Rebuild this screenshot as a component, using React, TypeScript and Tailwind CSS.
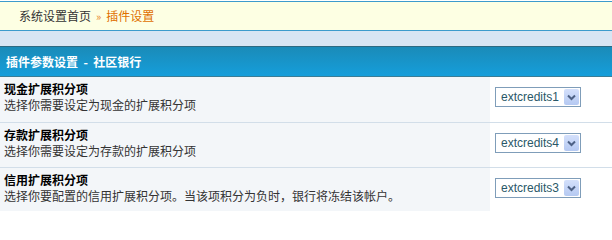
const FONT = { fontFamily: '"Noto Sans CJK SC", "Noto Sans", sans-serif' }

interface Row { title: string; desc: string; value: string }

const ROWS: Row[] = [
  { title: '现金扩展积分项', desc: '选择你需要设定为现金的扩展积分项', value: 'extcredits1' },
  { title: '存款扩展积分项', desc: '选择你需要设定为存款的扩展积分项', value: 'extcredits4' },
  { title: '信用扩展积分项', desc: '选择你要配置的信用扩展积分项。当该项积分为负时，银行将冻结该帐户。', value: 'extcredits3' },
]

function FakeSelect({ value }: { value: string }) {
  return (
    <div className="flex h-[20px] w-[86px] items-center justify-between border border-[#7f9db9] bg-white pl-[5px] pr-[1px]">
      <span className="text-[12px] leading-none text-[#2a5868]" style={{ fontFamily: '"Liberation Sans", Arial, sans-serif' }}>
        {value}
      </span>
      <span className="flex h-[16px] w-[15px] items-center justify-center rounded-[2px] bg-gradient-to-b from-[#d4e0fb] to-[#b5c9f2]">
        <svg width="9" height="7" viewBox="0 0 9 7">
          <path d="M1 1.5 L4.5 5 L8 1.5" fill="none" stroke="#4d6185" strokeWidth="2" />
        </svg>
      </span>
    </div>
  )
}

export default function App() {
  return (
    <div className="w-[612px] h-[211px] overflow-hidden bg-white text-[12px]" style={FONT}>
      {/* breadcrumb */}
      <div className="mt-[1px] h-[30px] border-y border-[#3d9bcc] bg-[#fdffe3] pl-[19px] flex items-center">
        <span className="text-[#333]">系统设置首页</span>
        <span className="mx-[5px] text-[#e8862a] text-[11px]">»</span>
        <span className="text-[#e07000]">插件设置</span>
      </div>

      {/* spacer band */}
      <div className="h-[15px] bg-[#d8e5f3]" />

      {/* header */}
      <div className="h-[31px] border-t border-[#2d6a82] border-b border-b-[#3a7d96] bg-gradient-to-b from-[#1a8bb8] to-[#159edb] pl-[6px] flex items-center">
        <span className="font-bold text-white whitespace-pre">插件参数设置  -  社区银行</span>
      </div>

      {ROWS.map((r, i) => (
        <div key={i} className={`flex h-[45px] ${i > 0 ? 'border-t border-[#d2dee9]' : ''}`}>
          <div className="w-[490px] shrink-0 bg-[#f3f6f9] pl-[4px] pt-[4px] leading-[16px]">
            <div className="font-bold text-black">{r.title}</div>
            <div className="text-[#333]">{r.desc}</div>
          </div>
          <div className="flex-1 bg-white pl-[5px] pt-[10px]">
            <FakeSelect value={r.value} />
          </div>
        </div>
      ))}
    </div>
  )
}
